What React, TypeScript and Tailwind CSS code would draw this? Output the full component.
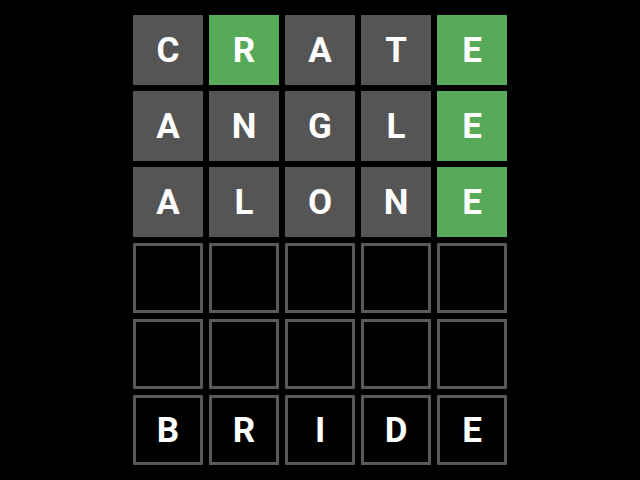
import React from "react";

type Cell = { l: string; s: "gray" | "green" | "empty" | "typed" };

const rows: Cell[][] = [
  [
    { l: "C", s: "gray" },
    { l: "R", s: "green" },
    { l: "A", s: "gray" },
    { l: "T", s: "gray" },
    { l: "E", s: "green" },
  ],
  [
    { l: "A", s: "gray" },
    { l: "N", s: "gray" },
    { l: "G", s: "gray" },
    { l: "L", s: "gray" },
    { l: "E", s: "green" },
  ],
  [
    { l: "A", s: "gray" },
    { l: "L", s: "gray" },
    { l: "O", s: "gray" },
    { l: "N", s: "gray" },
    { l: "E", s: "green" },
  ],
  Array.from({ length: 5 }, () => ({ l: "", s: "empty" as const })),
  Array.from({ length: 5 }, () => ({ l: "", s: "empty" as const })),
  [
    { l: "B", s: "typed" },
    { l: "R", s: "typed" },
    { l: "I", s: "typed" },
    { l: "D", s: "typed" },
    { l: "E", s: "typed" },
  ],
];

function Tile({ c }: { c: Cell }) {
  if (c.s === "gray")
    return (
      <div className="w-[70px] h-[70px] bg-[#555555] flex items-center justify-center text-white text-[35px] leading-none font-bold">
        {c.l}
      </div>
    );
  if (c.s === "green")
    return (
      <div className="w-[70px] h-[70px] bg-[#56aa58] flex items-center justify-center text-white text-[35px] leading-none font-bold">
        {c.l}
      </div>
    );
  return (
    <div className="w-[70px] h-[70px] border-[3px] border-[#595959] flex items-center justify-center text-white text-[35px] leading-none font-bold">
      {c.l}
    </div>
  );
}

export default function App() {
  return (
    <div
      className="w-[640px] h-[480px] bg-black flex items-center justify-center"
      style={{ fontFamily: "Roboto, 'Liberation Sans', sans-serif" }}
    >
      <div className="grid grid-cols-5 gap-[6px]">
        {rows.flatMap((r, i) => r.map((c, j) => <Tile key={`${i}-${j}`} c={c} />))}
      </div>
    </div>
  );
}
